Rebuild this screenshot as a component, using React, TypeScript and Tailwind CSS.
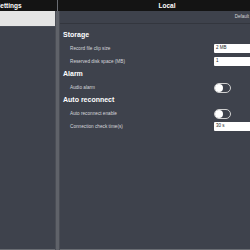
import React from 'react';

const font = {fontFamily: '"Liberation Sans", Arial, sans-serif'};

function Toggle() {
  return (
    <div className="w-[17px] h-[10px] rounded-full border border-[#d0d0d0] bg-[#3e424c] relative">
      <div className="absolute left-0 top-0 w-[8px] h-[8px] rounded-full bg-white" />
    </div>
  );
}

function Field({value}: {value: string}) {
  return (
    <div className="w-[36px] h-[9px] bg-white rounded-l-[1px] px-[2px] flex items-center text-[4.5px] text-[#222]">
      {value}
    </div>
  );
}

function Row({label, children}: {label: string; children: React.ReactNode}) {
  return (
    <div className="flex items-center justify-between h-[13px] pl-[7px]">
      <span className="text-[4.7px] text-[#d6d8dc]">{label}</span>
      {children}
    </div>
  );
}

function Heading({title}: {title: string}) {
  return (
    <div className="h-[13px] flex items-center text-[7px] font-bold text-white">{title}</div>
  );
}

export default function App() {
  return (
    <div className="w-[250px] h-[250px] flex bg-[#3e424c] overflow-hidden" style={font}>
      {/* Left panel */}
      <div className="w-[55px] flex flex-col border-b border-[#6a6d73]">
        <div className="h-[11px] bg-[#141414] flex items-center overflow-hidden">
          <span className="text-[6.5px] font-bold text-white whitespace-nowrap -ml-[4px]">Settings</span>
        </div>
        <div className="h-[15px] bg-[#e4e4e4]" />
        <div className="flex-1 border-t border-[#474b55]" />
      </div>
      {/* Divider */}
      <div className="w-[5px] flex flex-col">
        <div className="h-[11px] bg-[#141414] flex justify-center">
          <div className="w-[1px] h-full bg-[#6a6d73]" />
        </div>
        <div className="flex-1 bg-[#5f6269] border-x border-[#4a4d55]" />
      </div>
      {/* Right panel */}
      <div className="flex-1 flex flex-col border-b border-[#6a6d73]">
        <div className="h-[11px] bg-[#141414] flex items-center justify-center pl-[24px]">
          <span className="text-[6.5px] font-bold text-white">Local</span>
        </div>
        <div className="h-[13px] flex items-center justify-end border-b border-[#33363e] pr-[1px]">
          <span className="text-[4.5px] text-[#d6d8dc] whitespace-nowrap">Default</span>
        </div>
        <div className="pl-[3px] pt-[5px] flex flex-col">
          <Heading title="Storage" />
          <Row label="Record file clip size"><Field value="2 MB" /></Row>
          <Row label="Reserved disk space (MB)"><Field value="1" /></Row>
          <Heading title="Alarm" />
          <Row label="Audio alarm"><div className="w-[36px]"><Toggle /></div></Row>
          <Heading title="Auto reconnect" />
          <Row label="Auto reconnect enable"><div className="w-[36px]"><Toggle /></div></Row>
          <Row label="Connection check time(s)"><Field value="30 s" /></Row>
        </div>
      </div>
    </div>
  );
}
